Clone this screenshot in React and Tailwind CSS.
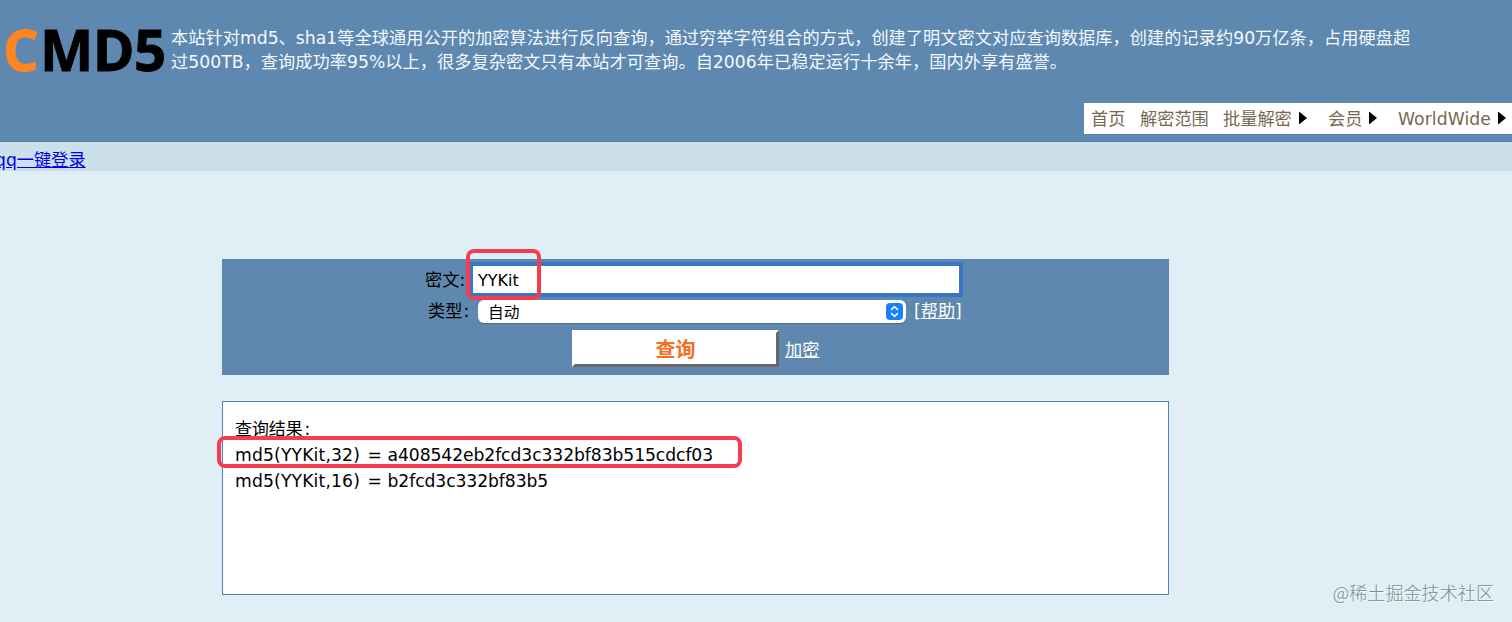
const NAV_ITEMS = [
  { label: "首页", className: "w-[49px]" },
  { label: "解密范围", className: "w-[83px]" },
  { label: "批量解密", className: "w-[105px]", arrow: true },
  { label: "会员", className: "w-[70px]", arrow: true },
  { label: "WorldWide", className: "w-[114px] tracking-[0.1px]", arrow: true },
];

const HASHES = [
  { source: "md5(YYKit,32)", value: "a408542eb2fcd3c332bf83b515cdcf03" },
  { source: "md5(YYKit,16)", value: "b2fcd3c332bf83b5" },
];

function Arrow() {
  return (
    <svg width="8" height="14" viewBox="0 0 8 14" className="ml-[7px] mb-[2px] shrink-0">
      <path d="M0 0.5L8 7L0 13.5Z" fill="#000" />
    </svg>
  );
}

function Header() {
  return (
    <header className="h-[142px] bg-[#5e88b0] flex flex-col border-b border-[#527ba5]">
      <div className="flex h-[103px]">
        <div className="w-[171px] shrink-0 pl-[3px] pt-[10px] font-['Open_Sans'] font-bold text-[56.5px] leading-[80px] tracking-[-0.5px] whitespace-nowrap text-black [-webkit-text-stroke:0.8px_currentColor]">
          <span className="mr-[1.5px] text-[#ff8520]">C</span>MD5
        </div>
        <p className="pt-[26px] text-[#f4f9ff] leading-[24px] tracking-[0.04px] whitespace-nowrap">
          本站针对md5、sha1等全球通用公开的加密算法进行反向查询，通过穷举字符组合的方式，创建了明文密文对应查询数据库，创建的记录约90万亿条，占用硬盘超
          <br />
          <span className="tracking-[0.05px]">
            过500TB，查询成功率95%以上，很多复杂密文只有本站才可查询。自2006年已稳定运行十余年，国内外享有盛誉。
          </span>
        </p>
      </div>
      <nav className="self-end w-[428px] h-[31px] pl-[7px] bg-white flex items-center text-[#75694f] whitespace-nowrap">
        {NAV_ITEMS.map((item) => (
          <a key={item.label} className={`${item.className} shrink-0 flex items-center pt-[2px]`}>
            {item.label}
            {item.arrow && <Arrow />}
          </a>
        ))}
      </nav>
    </header>
  );
}

function SearchForm() {
  return (
    <form className="ml-[222px] mt-[88px] w-[947px] h-[116px] bg-[#5e88b0] text-black">
      <div className="flex h-[38px] pl-[203px] pt-[3px]">
        <label className="w-[44px] shrink-0 leading-[37px] whitespace-nowrap">密文:</label>
        <div className="relative w-[494px] h-[35px] border-4 border-[#3b75c8] bg-white pl-[5px] text-[16px] leading-[29px]">
          YYKit
          {/* highlight around the typed text */}
          <span className="absolute -left-[7px] -top-[17px] w-[75px] h-[51px] border-4 border-[#f53d50] rounded-[8px]" />
        </div>
      </div>
      <div className="flex items-center h-[30px] pl-[206px]">
        <label className="w-[50px] shrink-0 whitespace-nowrap">
          类型<span className="ml-[1px]">:</span>
        </label>
        <div className="-mt-px w-[428px] h-[23px] bg-white rounded-[6px] shadow-[0_1px_1px_#52677b] flex items-center justify-between pl-[10px] pr-[3px] text-[15.7px]">
          <span className="pt-[3px]">自动</span>
          <span className="w-[17px] h-[17px] rounded-[4px] bg-[#1982fb] flex items-center justify-center">
            <svg width="9" height="13" viewBox="0 0 9 13" fill="none" stroke="white" strokeWidth="1.6" strokeLinecap="round" strokeLinejoin="round">
              <path d="M1.5 4.5L4.5 1.7L7.5 4.5M1.5 8.5L4.5 11.3L7.5 8.5" />
            </svg>
          </span>
        </div>
        <span className="ml-[8px] text-white whitespace-nowrap">
          [<a className="underline">帮助</a>]
        </span>
      </div>
      <div className="flex pl-[350px] pt-[3px]">
        <button
          type="button"
          className="w-[207px] h-[37px] bg-white border-t-[3px] border-l-[3px] border-r-[3px] border-b-[3px] border-t-white border-l-white border-r-[#6a6866] border-b-[#6a6866] pt-[2px] text-[#fb6b20] text-[20px] leading-[30px] font-bold"
        >
          查询
        </button>
        <a className="ml-[6px] leading-[41px] text-white underline">加密</a>
      </div>
    </form>
  );
}

function Result() {
  return (
    <section className="relative ml-[222px] mt-[26px] w-[947px] h-[194px] bg-white border border-[#5580b0] pl-[12px] pt-[14px] text-black leading-[26px] whitespace-nowrap">
      <div className="text-[16.9px] h-[26px]">
        查询结果<span className="ml-[2px]">:</span>
      </div>
      {HASHES.map((hash) => (
        <div key={hash.source} className="flex">
          <span className="w-[132.5px] tracking-[0.15px]">{hash.source}</span>
          <span className="w-[20px]">=</span>
          <span className="tracking-[-0.09px]">{hash.value}</span>
        </div>
      ))}
      <span className="absolute -left-[6px] top-[34px] w-[525px] h-[32px] border-4 border-[#f53d50] rounded-[8px]" />
    </section>
  );
}

export default function App() {
  return (
    <div className="relative w-full h-[622px] overflow-hidden bg-[#e0eef6] font-['DejaVu_Sans','Noto_Sans_CJK_SC',sans-serif] text-[17.2px]">
      <Header />
      <div className="h-[29px] bg-[#cce0ec] leading-[36px] whitespace-nowrap">
        <a className="-ml-[5px] text-[#0000ee] underline">qq一键登录</a>
      </div>
      <SearchForm />
      <Result />
      <div className="absolute right-[18px] bottom-[16px] font-['Noto_Sans_CJK_SC',sans-serif] font-light text-[18.1px] leading-[28px] text-[#7c8b95] [text-shadow:1px_1px_0_#f4f9fc]">
        @稀土掘金技术社区
      </div>
    </div>
  );
}
